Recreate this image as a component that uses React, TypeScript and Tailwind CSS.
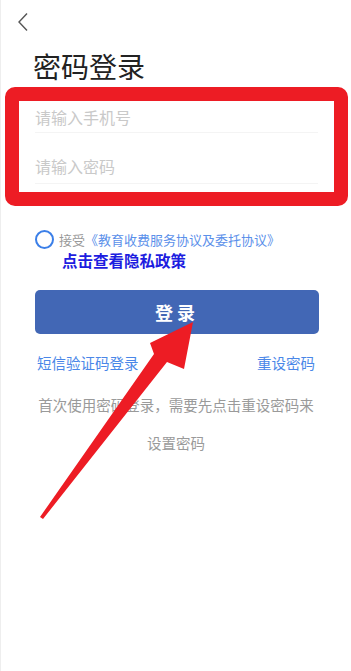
export default function App() {
  return (
    <div className="relative min-h-[671px] w-full overflow-hidden bg-white border-l border-[#eeeeee] font-['Noto_Sans_CJK_SC','Noto_Sans',sans-serif]">
      {/* header */}
      <div className="h-[48px] pl-[15px] pt-[12px]">
        <svg width="14" height="20" viewBox="0 0 14 20" fill="none">
          <polyline points="11,1.5 3,10 11,18.5" stroke="#555555" strokeWidth="1.4" />
        </svg>
      </div>

      <h1 className="ml-[32px] text-[28px] leading-[36px] text-[#222222]">密码登录</h1>

      {/* inputs, wrapped by the red annotation frame */}
      <div className="mt-[3px] ml-[4px] mr-[3px] rounded-[10px] border-[14px] border-[#ed1c24] bg-white px-[16px] pb-[8px]">
        <div className="border-b border-[#f4f4f4] pt-[8px] pb-[7px] text-[16px] leading-[16px] text-[#c9c9c9]">
          请输入手机号
        </div>
        <div className="border-b border-[#f4f4f4] pt-[25px] pb-[9px] text-[16px] leading-[16px] text-[#c9c9c9]">
          请输入密码
        </div>
      </div>

      {/* agreement */}
      <div className="mt-[24px] flex items-start pl-[34px]">
        <div className="h-[19px] w-[19px] shrink-0 rounded-full border-[2px] border-[#3b7fe8]" />
        <div className="ml-[5px]">
          <p className="text-[13px] leading-[19px] text-[#999999]">
            接受<span className="text-[#5b90ea]">《教育收费服务协议及委托协议》</span>
          </p>
          <p className="mt-[2px] pl-[3px] text-[15.5px] font-bold leading-[18px] text-[#1d1de0]">点击查看隐私政策</p>
        </div>
      </div>

      {/* login button */}
      <button className="mt-[21px] ml-[34px] flex h-[44px] w-[284px] items-center justify-center rounded-[5px] bg-[#4267b5] text-[18px] font-bold tracking-[4px] text-white">
        登录
      </button>

      <div className="mt-[19px] flex justify-between px-[36px] text-[14.5px] leading-[20px] text-[#4a87e8]">
        <span>短信验证码登录</span>
        <span>重设密码</span>
      </div>

      <p className="mt-[13px] px-[34px] text-center text-[14.5px] leading-[38px] text-[#9a9a9a]">
        首次使用密码登录，需要先点击重设密码来设置密码
      </p>

      {/* red annotation arrow */}
      <svg className="pointer-events-none absolute left-0 top-0" width="351" height="671" viewBox="0 0 351 671">
        <polygon
          points="192,322 183,369 166,362 42,519 39,517 153,354 149,343"
          fill="#ed1c24"
        />
      </svg>
    </div>
  )
}
